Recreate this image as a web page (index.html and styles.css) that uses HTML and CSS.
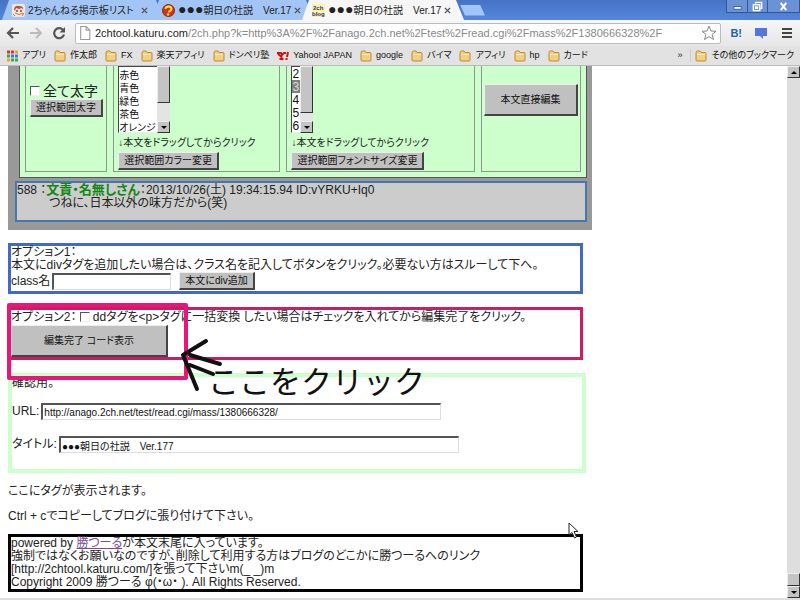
FILE: index.html
```html
<!DOCTYPE html>
<html lang="ja">
<head>
  <title>●●●朝日の社説 Ver.177</title>
  <meta charset="UTF-8">
  <meta name="viewport" content="width=device-width, initial-scale=1.0">
  <link rel="stylesheet" href="styles.css">
</head>
<body>
  <svg width="0" height="0" class="defs">
    <symbol id="folder" viewBox="0 0 12 12">
      <path d="M1 3Q1 1 2.500 1H5L6 2.500H10Q11 2.500 11 3.500V10Q11 11 10 11H2Q1 11 1 10Z" fill="#f6cf7d" stroke="#b98a3c"/>
      <path d="M2 4.500H10" stroke="#fdecc0"/>
    </symbol>
  </svg>

  <header class="browser">
    <div class="tabs">
      <div class="tab">
        <svg class="favicon" viewBox="0 0 13 13"><rect width="13" height="13" rx="2" fill="#f7e6dc"/><path d="M2 5Q3 1 7 2Q12 2 11 6L10 4L7 5L4 4L3 7Z" fill="#b5533c"/><circle cx="5" cy="7" r="1" fill="#653"/><circle cx="9" cy="7" r="1" fill="#653"/><path d="M3 9Q7 12 11 9M1 10L3 12M12 9L10 12" stroke="#c8705c" fill="none"/></svg>
        <span class="tab-title">2ちゃんねる掲示板リスト</span>
        <button class="tab-close" aria-label="閉じる"><svg viewBox="0 0 8 8"><path d="M1 1L7 7M7 1L1 7" stroke="#555" stroke-width="1.600"/></svg></button>
      </div>
      <div class="tab">
        <svg class="favicon" viewBox="0 0 13 13"><circle cx="6.500" cy="6.500" r="6" fill="#d9301c" stroke="#7b2a10"/><path d="M3.500 5Q3.500 2.500 6.500 2.500Q9.500 2.500 9.500 5Q9.500 6.500 6.500 8" stroke="#ffe14a" stroke-width="2" fill="none"/><circle cx="6" cy="10.500" r="1.200" fill="#ffe14a"/></svg>
        <span class="tab-title"><span class="dots">●●●</span>朝日の社説　Ver.17</span>
        <button class="tab-close" aria-label="閉じる"><svg viewBox="0 0 8 8"><path d="M1 1L7 7M7 1L1 7" stroke="#555" stroke-width="1.600"/></svg></button>
      </div>
      <div class="tab active">
        <svg class="favicon" viewBox="0 0 13 13"><rect width="13" height="13" fill="#fbf3a5"/><text x="1" y="6" class="favicon-text">2ch</text><text x="0" y="12" class="favicon-text">blog</text></svg>
        <span class="tab-title"><span class="dots">●●●</span>朝日の社説　Ver.17</span>
        <button class="tab-close" aria-label="閉じる"><svg viewBox="0 0 8 8"><path d="M1 1L7 7M7 1L1 7" stroke="#555" stroke-width="1.600"/></svg></button>
      </div>
      <button class="new-tab" aria-label="新しいタブ"></button>
      <div class="window-buttons">
        <button aria-label="最小化"><svg viewBox="0 0 12 12"><rect x="2" y="6" width="8" height="3" fill="#fff" stroke="#3a5c9e"/></svg></button>
        <button aria-label="元に戻す"><svg viewBox="0 0 12 12" fill="none" stroke="#fff" stroke-width="1.500"><path d="M4 3V1.500H10.500V8H9"/><rect x="1.500" y="4" width="7" height="6.500"/><rect x="4" y="6.500" width="2" height="1.500"/></svg></button>
        <button class="wide" aria-label="閉じる"><svg viewBox="0 0 12 12"><path d="M3 2L9 10M9 2L3 10" stroke="#fff" stroke-width="2.200"/></svg></button>
      </div>
    </div>

    <div class="toolbar">
      <button aria-label="戻る"><svg viewBox="0 0 14 14"><path d="M13 7H2M7 2L2 7L7 12" stroke="#555" stroke-width="2.200" fill="none"/></svg></button>
      <button aria-label="進む"><svg viewBox="0 0 14 14"><path d="M1 7H12M7 2L12 7L7 12" stroke="#bbb" stroke-width="2" fill="none"/></svg></button>
      <button aria-label="再読み込み"><svg viewBox="0 0 14 14"><path d="M11 4A5 5 0 1 0 12 8.500" stroke="#555" stroke-width="2.200" fill="none"/><path d="M13 1V6.500H7.500Z" fill="#555"/></svg></button>
      <div class="address">
        <svg class="page-icon" viewBox="0 0 10 13"><path d="M1 .5H6L9.500 4V12.500H1ZM6 .5V4H9.500" fill="#fff" stroke="#999"/></svg>
        <span class="url"><b>2chtool.katuru.com</b>/2ch.php?k=http%3A%2F%2Fanago.2ch.net%2Ftest%2Fread.cgi%2Fmass%2F1380666328%2F</span>
        <svg class="star" viewBox="0 0 16 16"><path d="M8 1L10 6L15 6.300L11 9.500L12.500 14.500L8 11.700L3.500 14.500L5 9.500L1 6.300L6 6Z" fill="#fff" stroke="#888"/></svg>
      </div>
      <div class="extensions">
        <span class="hatena">B!</span>
        <svg viewBox="0 0 14 14"><path d="M1 2H13V10H9V13L6 10H1Z" fill="#5577dd"/></svg>
        <svg viewBox="0 0 14 14"><path d="M2 3H12M2 7H12M2 11H12" stroke="#444" stroke-width="2.200"/></svg>
      </div>
    </div>

    <nav class="bookmarks">
      <a href="#"><svg viewBox="0 0 12 12"><path d="M1 2H4M5 2H8" stroke="#d33" stroke-width="3"/><path d="M9 2H12M1 10H4" stroke="#e9a52c" stroke-width="3"/><path d="M5 6H8M9 6H12" stroke="#47d" stroke-width="3"/><path d="M5 10H8M9 10H12M1 6H4" stroke="#3a5" stroke-width="3"/></svg>アプリ</a>
      <a href="#"><svg><use href="#folder"/></svg>作太郎</a>
      <a href="#"><svg><use href="#folder"/></svg>FX</a>
      <a href="#"><svg><use href="#folder"/></svg>楽天アフィリ</a>
      <a href="#"><svg><use href="#folder"/></svg>ドンペリ塾</a>
      <a href="#"><svg viewBox="0 0 12 12"><path d="M0 3H4L5 5L7 3H9M4.500 5V9M2.500 9H6.500M1 4L4 6.500" stroke="#c11" stroke-width="1.800" fill="none"/><path d="M11 2L10 7M9.500 8V10" stroke="#c11" stroke-width="2"/></svg>Yahoo! JAPAN</a>
      <a href="#"><svg><use href="#folder"/></svg>google</a>
      <a href="#"><svg><use href="#folder"/></svg>バイマ</a>
      <a href="#"><svg><use href="#folder"/></svg>アフィリ</a>
      <a href="#"><svg><use href="#folder"/></svg>hp</a>
      <a href="#"><svg><use href="#folder"/></svg>カード</a>
      <span class="more">»</span>
      <a href="#" class="others"><svg><use href="#folder"/></svg>その他のブックマーク</a>
    </nav>
  </header>

  <div class="view">
    <main class="page">
      <section class="editor">
        <div class="tools">
          <div class="tool tool-bold">
            <label class="big"><input type="checkbox">全て太字</label>
            <button class="btn">選択範囲太字</button>
          </div>
          <div class="tool tool-color">
            <div class="list">
              <select size="5" aria-label="カラー">
                <option>赤色</option>
                <option>青色</option>
                <option>緑色</option>
                <option>茶色</option>
                <option>オレンジ</option>
              </select>
              <div class="list-bar"><i class="thumb"></i><i class="arrow down"></i></div>
            </div>
            <p>↓本文をドラッグしてからクリック</p>
            <button class="btn">選択範囲カラー変更</button>
          </div>
          <div class="tool tool-size">
            <div class="list list-size">
              <select size="5" aria-label="フォントサイズ">
                <option>2</option>
                <option selected>3</option>
                <option>4</option>
                <option>5</option>
                <option>6</option>
              </select>
              <div class="list-bar"><i class="thumb"></i><i class="arrow down"></i></div>
            </div>
            <p>↓本文をドラッグしてからクリック</p>
            <button class="btn">選択範囲フォントサイズ変更</button>
          </div>
          <div class="tool tool-edit">
            <button class="btn tall">本文直接編集</button>
          </div>
        </div>
        <dl class="post">
          <dt>588 ：<b>文責・名無しさん</b>：2013/10/26(土) 19:34:15.94 ID:vYRKU+Iq0</dt>
          <dd>つねに、日本以外の味方だから(笑)</dd>
        </dl>
      </section>

      <section class="box option1">
        <p>オプション1：</p>
        <p>本文にdivタグを追加したい場合は、クラス名を記入してボタンをクリック。必要ない方はスルーして下へ。</p>
        <div class="row">
          <label for="cls">class名</label>
          <input type="text" id="cls">
          <button class="btn">本文にdiv追加</button>
        </div>
      </section>

      <section class="box option2">
        <p>オプション2： <label><input type="checkbox">ddタグを&lt;p&gt;タグに一括変換 したい場合はチェックを入れてから編集完了をクリック。</label></p>
        <button class="btn tall">編集完了 コード表示</button>
      </section>

      <section class="box confirm">
        <p>確認用。</p>
        <div class="row">
          <label for="url">URL:</label>
          <input type="text" id="url" value="http://anago.2ch.net/test/read.cgi/mass/1380666328/">
        </div>
        <div class="row">
          <label for="title">タイトル:</label>
          <input type="text" id="title" value="●●●朝日の社説　Ver.177">
        </div>
      </section>

      <p class="note">ここにタグが表示されます。</p>
      <p class="note">Ctrl + cでコピーしてブログに張り付けて下さい。</p>

      <footer class="box powered">
        powered by <a href="#">勝つーる</a>が本文末尾に入っています。<br>
        強制ではなくお願いなのですが、削除して利用する方はブログのどこかに勝つーるへのリンク<br>
        [http://2chtool.katuru.com/]を張って下さいm(_ _)m<br>
        Copyright 2009 勝つーる φ(・ω・ ). All Rights Reserved.
      </footer>

      <!-- hand-drawn hint over the form -->
      <div class="hint-frame"></div>
      <svg class="hint-arrow" viewBox="0 0 46 60"><path d="M26 7L3 21L17 55M10 21L40 30M10 31L33 40" stroke="#111" stroke-width="4" stroke-linecap="round" stroke-linejoin="round" fill="none"/></svg>
      <div class="hint-text">ここをクリック</div>
      <svg class="cursor" viewBox="0 0 11 17"><path d="M1 1V13L4 10.500L6.500 16L8.500 15L6 9.500H10Z" fill="#fff" stroke="#222"/></svg>
    </main>
    <div class="scrollbar">
      <i class="arrow up"></i>
      <i class="thumb"></i>
      <i class="arrow down"></i>
    </div>
  </div>
</body>
</html>
```
FILE: styles.css
```css
* {
  box-sizing: border-box;
}
body {
  margin: 0;
  height: 100vh;
  display: flex;
  flex-direction: column;
  overflow: hidden;
  background: #fff;
  border-bottom: 2px solid #ddd;
  color: #222;
  font-family: "Liberation Sans", "Noto Sans CJK JP", sans-serif;
  font-feature-settings: "palt";
  font-size: 12px;
  line-height: 13px;
}
p, dl, dd {
  margin: 0;
}
button, input, select {
  font-family: inherit;
  font-feature-settings: inherit;
  color: #111;
}
input[type="checkbox"] {
  appearance: none;
  width: 10px;
  height: 10px;
  margin: 0 3px 0 0;
  background: #fff;
  border: 1px solid #eee;
  border-top-color: #555;
  border-left-color: #555;
}
.defs {
  position: absolute;
}

/* browser window */
.browser {
  flex: none;
  background: #e2e2e2;
  border-bottom: 1px solid #bbb;
}
.browser button {
  padding: 0;
  border: none;
  background: none;
}
.tabs {
  display: flex;
  height: 20px;
  padding-left: 2px;
  background: linear-gradient(#4673c4, #5586dc);
}
.tab {
  display: flex;
  align-items: center;
  gap: 3px;
  width: 162px;
  margin-right: -12px;
  padding: 0 16px 0 10px;
  background: #a3c5f5;
  clip-path: polygon(7px 0, 154px 0, 162px 100%, 0 100%);
  font-size: 10px;
}
.tab.active {
  background: #f6f6f6;
  z-index: 1;
}
.favicon {
  flex: none;
  width: 13px;
  height: 13px;
}
.favicon-text {
  font-size: 6px;
  font-weight: bold;
  fill: #33307a;
}
.tab-title {
  flex: 1;
  white-space: nowrap;
}
.dots {
  font-size: 14px;
}
.tab-close svg {
  display: block;
  width: 7px;
  height: 7px;
}
.new-tab {
  align-self: center;
  width: 25px;
  height: 11px;
  margin-left: 8px;
}
.browser .new-tab {
  background: #a3c5f5;
  clip-path: polygon(0 0, 20px 0, 25px 100%, 5px 100%);
}
.window-buttons {
  display: flex;
  height: 13px;
  margin-left: auto;
  border: 1px solid #34559a;
  border-top: none;
}
.window-buttons button {
  display: flex;
  align-items: center;
  justify-content: center;
  width: 20px;
  background: #6c92d6;
}
.window-buttons button + button {
  border-left: 1px solid #34559a;
}
.window-buttons .wide {
  width: 32px;
}
.window-buttons svg {
  width: 11px;
  height: 11px;
}
.toolbar {
  display: flex;
  align-items: center;
  height: 26px;
  padding: 0 6px;
  gap: 9px;
  background: linear-gradient(#f6f6f6, #e6e6e6);
}
.toolbar svg {
  display: block;
  flex: none;
  width: 14px;
  height: 14px;
}
.address {
  flex: 1;
  display: flex;
  align-items: center;
  gap: 4px;
  min-width: 0;
  height: 21px;
  padding: 0 3px;
  background: #fff;
  border: 1px solid #bbb;
  border-radius: 2px;
}
.toolbar .page-icon {
  width: 12px;
}
.toolbar .star {
  width: 16px;
  height: 16px;
}
.url {
  flex: 1;
  min-width: 0;
  overflow: hidden;
  white-space: nowrap;
  color: #888;
  font-size: 11px;
}
.url b {
  color: #222;
  font-weight: normal;
}
.extensions {
  display: flex;
  align-items: center;
  gap: 12px;
}
.hatena {
  color: #1a62a8;
  font-size: 11px;
  font-weight: bold;
}
.bookmarks {
  display: flex;
  align-items: center;
  gap: 8px;
  height: 19px;
  padding: 0 6px;
  font-size: 9px;
  white-space: nowrap;
}
.bookmarks a {
  display: flex;
  align-items: center;
  gap: 4px;
  color: #111;
  text-decoration: none;
}
.bookmarks svg {
  width: 12px;
  height: 12px;
}
.more {
  margin-left: auto;
}
.bookmarks .others {
  padding-left: 4px;
  border-left: 1px solid #ccc;
}

/* page */
.view {
  flex: 1;
  display: flex;
  min-height: 0;
}
.page {
  flex: 1;
  position: relative;
  padding: 0 8px;
  overflow: hidden;
}
.scrollbar {
  display: flex;
  flex-direction: column;
  width: 13px;
  background: #dedede;
}
.thumb {
  background: #c4c4c4;
  border: 1px solid #eee;
  border-right-color: #333;
  border-bottom-color: #333;
}
.scrollbar .thumb {
  height: 13px;
  margin-top: auto;
}
.arrow {
  display: flex;
  align-items: center;
  justify-content: center;
  height: 12px;
  background: #c4c4c4;
  border: 1px solid #eee;
  border-right-color: #333;
  border-bottom-color: #333;
}
.arrow::before {
  content: "";
  border: 3px solid transparent;
}
.arrow.up::before {
  border-top: none;
  border-bottom-color: #000;
}
.arrow.down::before {
  border-bottom: none;
  border-top-color: #000;
}

.btn {
  height: 18px;
  padding: 0 5px;
  background: #c0c0c0;
  border: 1px solid #eee;
  border-right: 2px solid #444;
  border-bottom: 2px solid #444;
  font-size: 10px;
  line-height: 13px;
  white-space: nowrap;
}
.editor {
  max-width: 584px;
  padding: 0 5px 8px 7px;
  background: #999;
}
.tools {
  display: flex;
  gap: 6px;
  margin-left: 4px;
  padding: 0 5px 5px;
  background: #cfc;
  border: 1px solid #555;
  border-top: none;
}
.tool {
  min-width: 0;
  height: 106px;
  padding: 0 4px;
  border: 1px solid #8a9a8a;
  border-top: none;
}
.tool p {
  margin-bottom: 2px;
  font-size: 10px;
  line-height: 14px;
  white-space: nowrap;
}
.tool-bold {
  flex: 72;
  padding-top: 17px;
}
.tool-color {
  flex: 157;
}
.tool-size {
  flex: 178;
}
.tool-edit {
  flex: 94;
  padding: 18px 2px;
}
.tool-edit .btn {
  width: 100%;
}
.big {
  display: block;
  font-size: 14px;
  line-height: 16px;
  white-space: nowrap;
}
.btn.tall {
  height: 32px;
}
.list {
  display: flex;
  width: 52px;
  height: 67px;
  margin-bottom: 3px;
}
.list-size {
  width: 22px;
}
.list select {
  flex: 1;
  min-width: 0;
  height: 67px;
  padding: 0;
  overflow: hidden;
  border: 1px solid #444;
  border-right: none;
  border-bottom-color: #eee;
  border-radius: 0;
  background: #fff;
  font-size: 10px;
  scrollbar-width: none;
}
.list-size select {
  font-size: 12px;
}
.list option {
  height: 13px;
  min-height: 0;
  padding: 0;
  line-height: 13px;
}
.list option:checked {
  background: linear-gradient(#808080, #808080);
  color: #ddd;
}
.list-bar {
  display: flex;
  flex-direction: column;
  justify-content: space-between;
  width: 13px;
  background: #e4e4e4;
}
.list-bar .thumb {
  height: 37px;
}
.list-size .thumb {
  height: 47px;
}
.post {
  height: 41px;
  margin-top: 3px;
  background: #ccc;
  border: 2px solid #4579ad;
}
.post b {
  color: #118811;
  font-size: 13px;
}
.post dd {
  margin-left: 32px;
}

.box {
  max-width: 575px;
  margin-top: 13px;
  border: 3px solid;
}
.row {
  display: flex;
  align-items: center;
}
.row input {
  height: 17px;
  padding: 0 1px;
  border: 1px solid #ddd;
  border-top: 2px solid #555;
  border-left: 2px solid #555;
  font-size: 10px;
}
.option1 {
  padding-bottom: 1px;
  border-color: #4169c8;
}
.option1 input {
  width: 119px;
  margin: 0 8px 0 2px;
}
.option2 {
  border-color: #c81e64;
}
.option2 p {
  line-height: 15px;
}
.option2 input {
  vertical-align: -1px;
}
.option2 .btn {
  display: block;
  width: 157px;
}
.confirm {
  max-width: 578px;
  height: 100px;
  border: 4px solid #cfc;
}
.confirm p {
  margin-bottom: 13px;
}
.confirm .row + .row {
  margin-top: 16px;
}
.confirm input {
  width: 400px;
  margin-left: 2px;
}
.note {
  margin-top: 12px;
}
.powered {
  margin-top: 11px;
  border-color: #000;
}
.powered a {
  color: #7a4a94;
}

/* hint overlay */
.hint-frame {
  position: absolute;
  left: 7px;
  top: 237px;
  width: 181px;
  height: 77px;
  border: 4px solid #ec1478;
  border-radius: 2px;
}
.hint-arrow {
  position: absolute;
  left: 180px;
  top: 268px;
  width: 46px;
  height: 60px;
}
.hint-text {
  position: absolute;
  left: 208px;
  top: 301px;
  color: #111;
  font-size: 31px;
  line-height: 32px;
  font-feature-settings: normal;
}
.cursor {
  position: absolute;
  left: 568px;
  top: 456px;
  width: 11px;
  height: 17px;
}
```
